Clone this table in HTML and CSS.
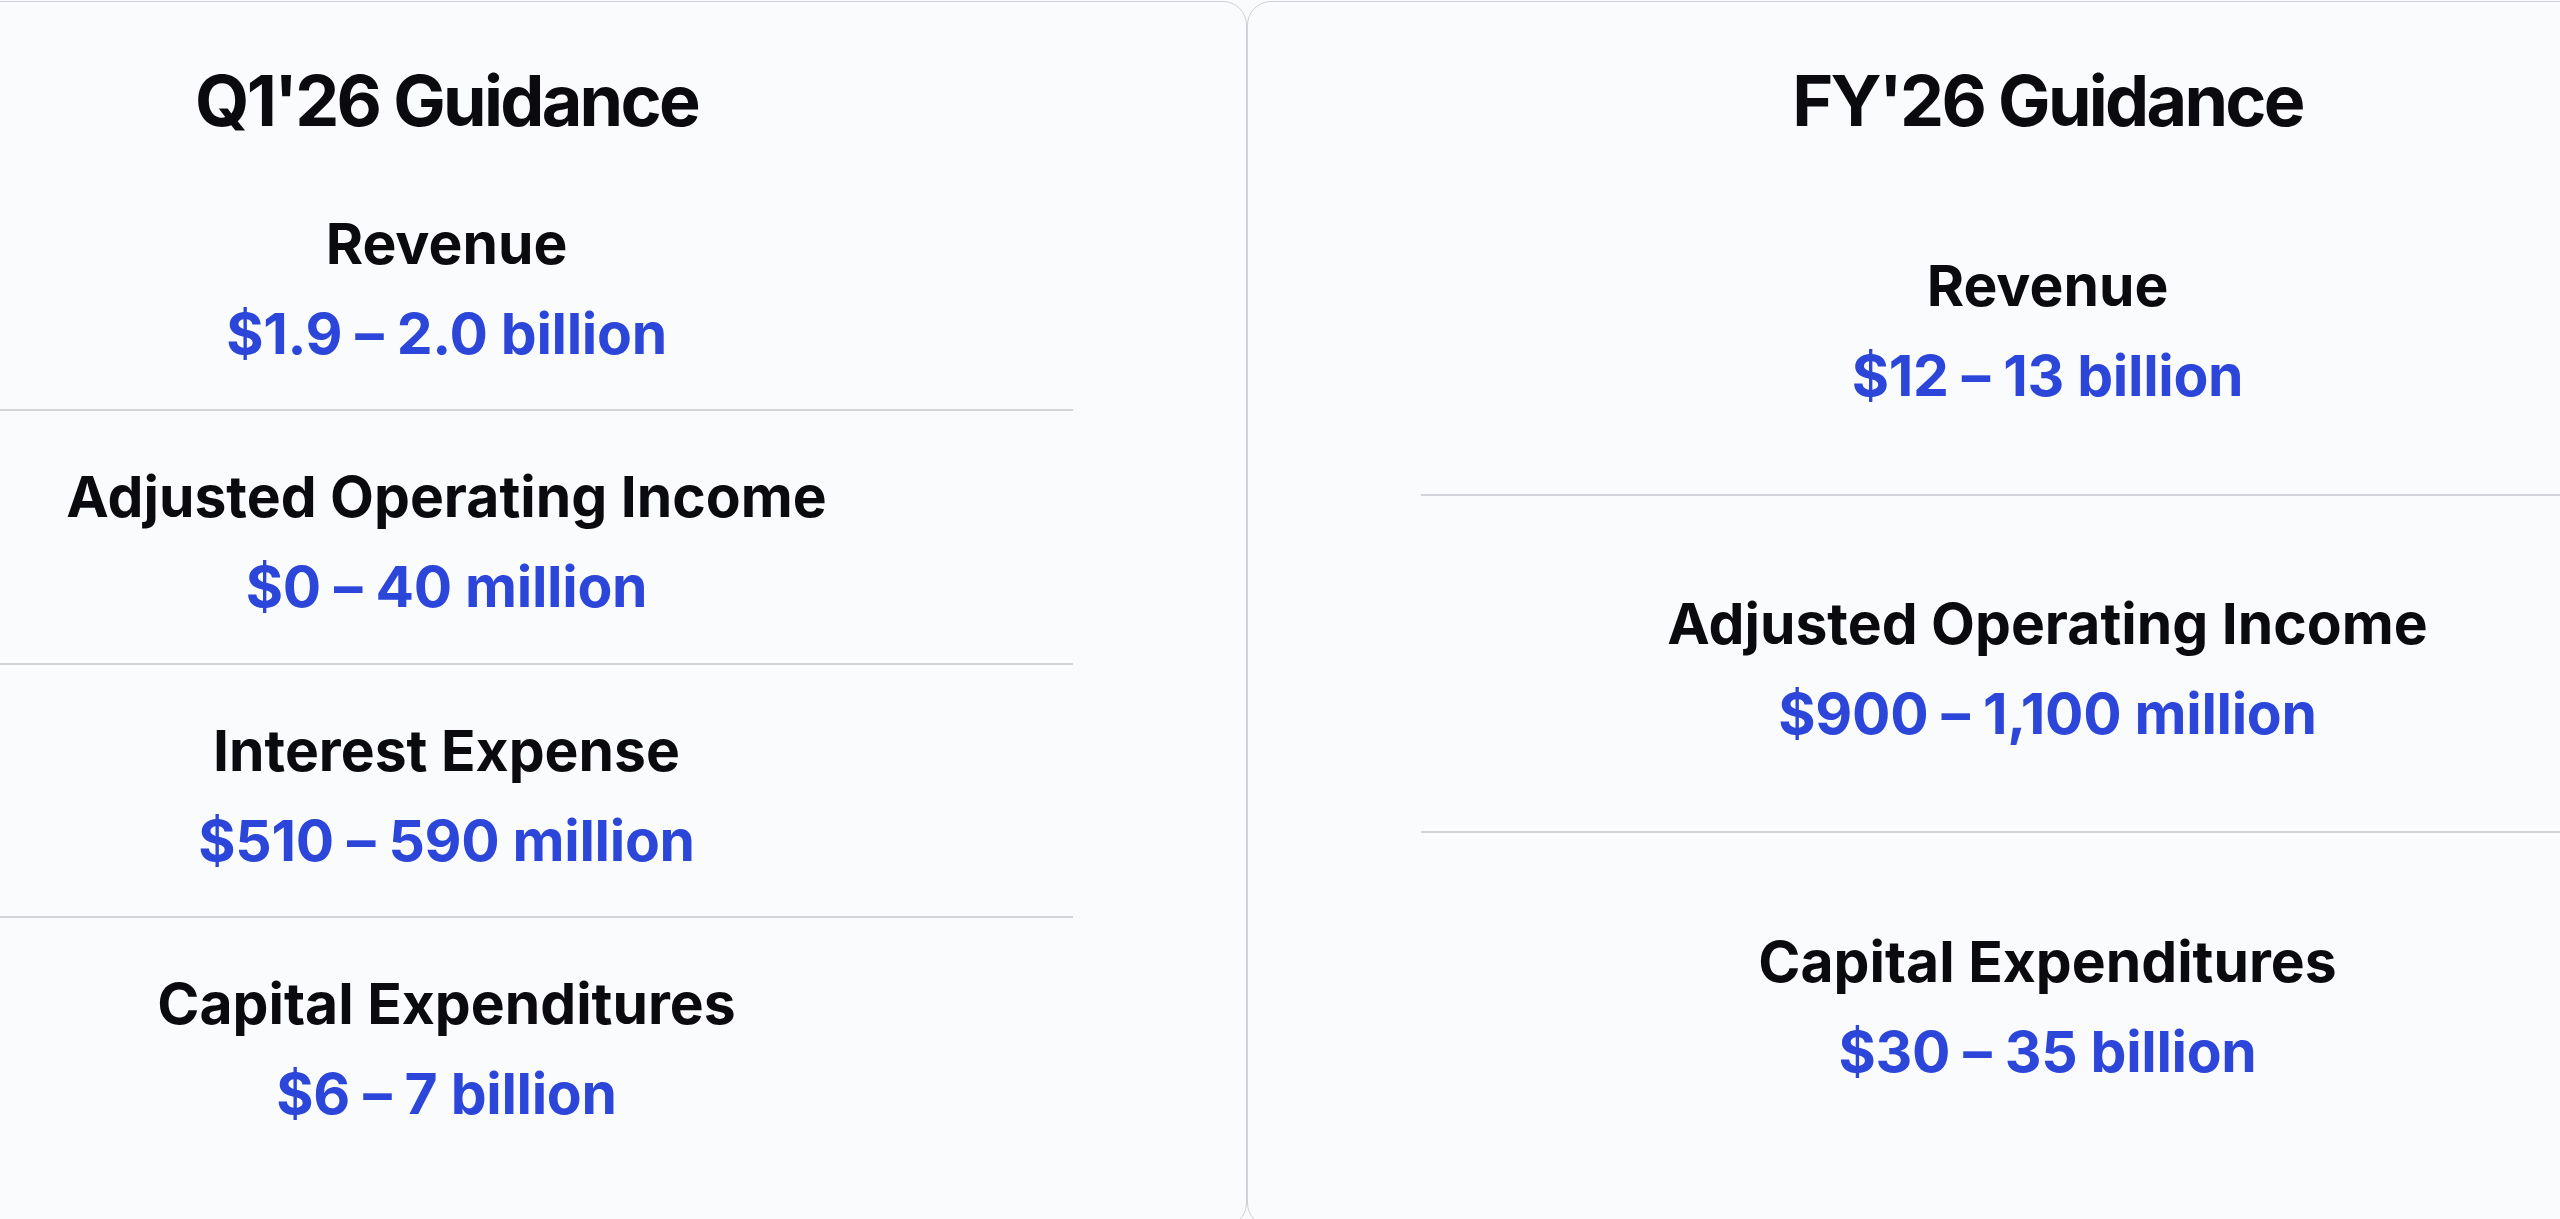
FILE: index.html
```html
<!DOCTYPE html>
<html lang="en">
<head>
<meta charset="utf-8">
<title>Guidance</title>
<link rel="stylesheet" href="styles.css">
</head>
<body>
<div class="board">
  <section class="card">
    <h2 class="card-title">Q1'26 Guidance</h2>
    <div class="rows">
      <div class="row"><div class="label">Revenue</div><div class="value">$1.9 – 2.0 billion</div></div>
      <div class="row"><div class="label">Adjusted Operating Income</div><div class="value">$0 – 40 million</div></div>
      <div class="row"><div class="label">Interest Expense</div><div class="value">$510 – 590 million</div></div>
      <div class="row"><div class="label">Capital Expenditures</div><div class="value">$6 – 7 billion</div></div>
    </div>
  </section>
  <section class="card">
    <h2 class="card-title">FY'26 Guidance</h2>
    <div class="rows">
      <div class="row"><div class="label">Revenue</div><div class="value">$12 – 13 billion</div></div>
      <div class="row"><div class="label">Adjusted Operating Income</div><div class="value">$900 – 1,100 million</div></div>
      <div class="row"><div class="label">Capital Expenditures</div><div class="value">$30 – 35 billion</div></div>
    </div>
  </section>
</div>
</body>
</html>
```
FILE: styles.css
```css
html, body {
  margin: 0;
  padding: 0;
  background: #fafbfd;
  overflow: hidden;
}
body {
  font-family: "Inter", "Noto Sans", sans-serif;
  color: #0b0b0f;
}
.board {
  display: flex;
  padding-top: 1px;
  margin-left: -354px;
}
.card {
  flex: 0 0 1601px;
  box-sizing: border-box;
  height: 1226px;
  border: 1px solid #cfd1d8;
  border-radius: 24px;
  background: #fafbfd;
  padding: 56px 173px 57px;
  display: flex;
  flex-direction: column;
}
.card-title {
  margin: 0 0 14px;
  font-size: 70px;
  line-height: 86px;
  font-weight: 700;
  text-align: center;
  letter-spacing: -2.7px;
}
.rows {
  flex: 1;
  display: flex;
  flex-direction: column;
}
.row {
  flex: 1;
  display: flex;
  flex-direction: column;
  align-items: center;
  justify-content: center;
  gap: 22px;
  border-bottom: 2px solid #d2d4da;
  padding-top: 11px;
}
.row:last-child {
  border-bottom: none;
}
.label {
  font-size: 57px;
  line-height: 68px;
  font-weight: 700;
}
.value {
  font-size: 57px;
  line-height: 68px;
  font-weight: 700;
  color: #2b46d9;
  letter-spacing: -0.3px;
}
```
